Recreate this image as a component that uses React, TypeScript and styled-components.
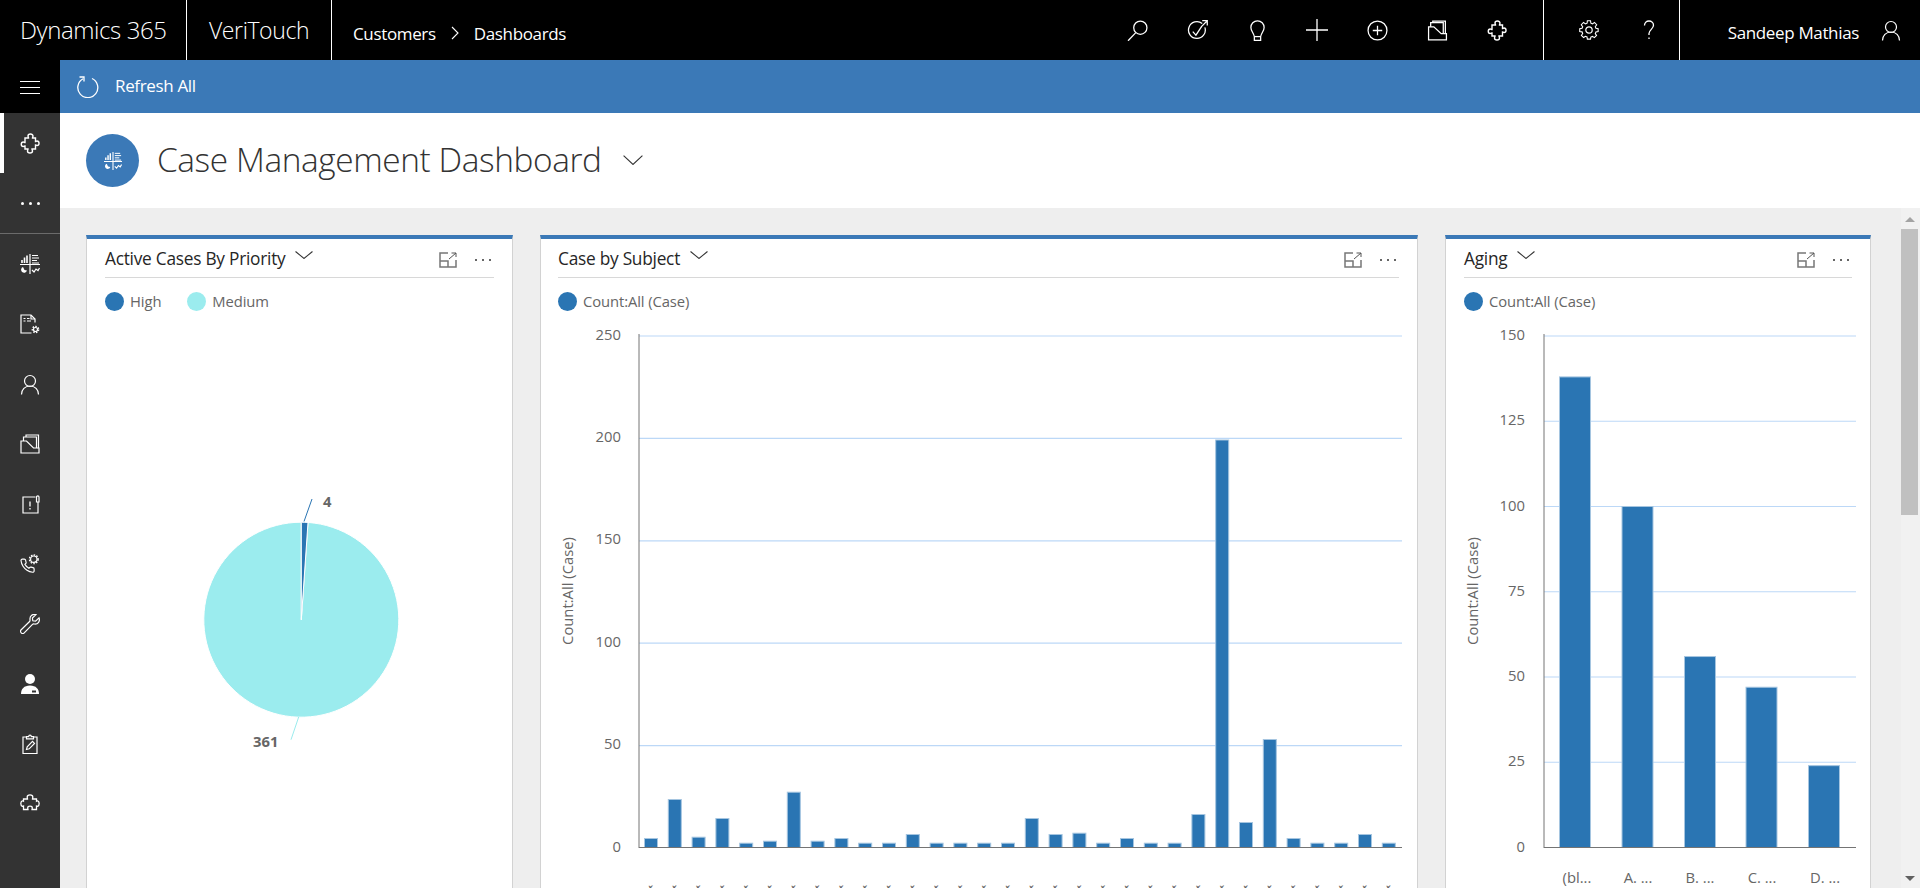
import React from "react";
import styled, { createGlobalStyle } from "styled-components";

const Global = createGlobalStyle`
  html, body { margin: 0; padding: 0; height: 100%; overflow: hidden; background: #eee; }
  #root { height: 100%; }
  * { box-sizing: border-box; }
  body { font-family: "Open Sans", "Noto Sans", "Liberation Sans", sans-serif; }
`;

const Page = styled.div`
  height: 888px;
  display: flex;
  flex-direction: column;
  overflow: hidden;
`;
const TopBar = styled.header`
  height: 60px;
  flex: none;
  background: #000;
  color: #fff;
  display: flex;
  align-items: stretch;
`;
const BrandCell = styled.div<{ $w: number; $pad: number; $size: number }>`
  width: ${(p) => p.$w}px;
  padding-left: ${(p) => p.$pad}px;
  font-size: ${(p) => p.$size}px;
  font-weight: 300;
  letter-spacing: -0.4px;
  border-right: 1px solid #fff;
  display: flex;
  align-items: center;
  padding-bottom: 1px;
  white-space: nowrap;
`;
const Crumbs = styled.nav`
  padding: 6px 0 0 21px;
  display: flex;
  align-items: center;
  gap: 15px;
  font-size: 17px;
  letter-spacing: -0.35px;
`;
const IconGroup = styled.div`
  margin-left: auto;
  display: flex;
  margin-right: 16px;
`;
const SettingsGroup = styled.div`
  border-left: 1px solid #fff;
  border-right: 1px solid #fff;
  padding-left: 15px;
  display: flex;
`;
const TopIcon = styled.button`
  width: 60px;
  height: 60px;
  padding: 0;
  border: 0;
  background: none;
  color: #fff;
  display: flex;
  align-items: center;
  justify-content: center;
`;
const UserCell = styled.div`
  width: 240px;
  display: flex;
  align-items: center;
  justify-content: flex-end;
  gap: 22px;
  padding-right: 19px;
  font-size: 17px;
  letter-spacing: -0.35px;
  span { padding-top: 4px; }
`;
const Body = styled.div`
  flex: 1;
  min-height: 0;
  display: flex;
`;
const Sidebar = styled.aside`
  width: 60px;
  flex: none;
  background: #333;
  color: #fff;
  display: flex;
  flex-direction: column;
`;
const Hamburger = styled.div`
  height: 53px;
  background: #000;
  padding-top: 2px;
  display: flex;
  flex-direction: column;
  align-items: center;
  justify-content: center;
  gap: 5px;
  i { display: block; width: 20px; height: 1px; background: #fff; }
`;
const NavItem = styled.div<{ $active?: boolean }>`
  height: 60px;
  flex: none;
  position: relative;
  display: flex;
  align-items: center;
  justify-content: center;
  &::before {
    content: "";
    display: ${(p) => (p.$active ? "block" : "none")};
    position: absolute;
    left: 0;
    top: 0;
    bottom: 0;
    width: 4px;
    background: #fff;
  }
`;
const NavRule = styled.div`
  height: 1px;
  flex: none;
  background: #6b6b6b;
`;
const Dots = styled.div<{ $color?: string; $size: number; $gap: number }>`
  display: flex;
  gap: ${(p) => p.$gap}px;
  i {
    width: ${(p) => p.$size}px;
    height: ${(p) => p.$size}px;
    border-radius: 50%;
    background: ${(p) => p.$color || "#fff"};
    display: block;
  }
`;
const Main = styled.main`
  flex: 1;
  min-width: 0;
  display: flex;
  flex-direction: column;
`;
const CommandBar = styled.div`
  height: 53px;
  flex: none;
  background: #3b79b7;
  color: #fff;
  display: flex;
  align-items: center;
  padding: 0 0 2px 17px;
  gap: 16px;
  font-size: 17px;
  letter-spacing: -0.35px;
`;
const PageHeader = styled.div`
  height: 95px;
  flex: none;
  background: #fff;
  display: flex;
  align-items: center;
  padding-left: 26px;
`;
const Badge = styled.div`
  width: 53px;
  height: 53px;
  border-radius: 50%;
  background: #3b79b7;
  color: #fff;
  display: flex;
  align-items: center;
  justify-content: center;
  margin-right: 18px;
`;
const PageTitle = styled.h1`
  margin: 0 21px 4px 0;
  font-size: 33.4px;
  font-weight: 300;
  color: #333;
  letter-spacing: -0.4px;
  white-space: nowrap;
`;
const PageCaret = styled.span`
  display: flex;
  margin-bottom: 2px;
`;
const Workspace = styled.div`
  flex: 1;
  min-height: 0;
  display: flex;
`;
const Cards = styled.div`
  flex: 1;
  min-width: 0;
  display: grid;
  grid-template-columns: 427px 878px 426px;
  column-gap: 27px;
  padding: 27px 0 0 26px;
  overflow: hidden;
`;
const Card = styled.section`
  height: 720px;
  background: #fff;
  border: 1px solid #d2d2d2;
  border-top: 4px solid #3b79b7;
  overflow: hidden;
`;
const CardHead = styled.div<{ $inset?: number }>`
  height: 39px;
  margin: 0 18px 0 ${(p) => p.$inset ?? 18}px;
  border-bottom: 1px solid #d8d8d8;
  display: flex;
  align-items: center;
  color: #333;
`;
const CardTitle = styled.h2`
  margin: 0 10px 0 0;
  font-size: 17.3px;
  font-weight: 400;
  color: #262626;
  letter-spacing: -0.25px;
  white-space: nowrap;
`;
const TitleCaret = styled.span`
  display: flex;
  margin-bottom: 7px;
`;
const CardTools = styled.div`
  margin-left: auto;
  display: flex;
  align-items: center;
  gap: 18px;
  padding-right: 3px;
  padding-top: 3px;
`;
const Legend = styled.div<{ $inset?: number }>`
  height: 46px;
  margin: 0 18px 0 ${(p) => p.$inset ?? 18}px;
  display: flex;
  align-items: center;
  gap: 26px;
`;
const LegendItem = styled.div<{ $color: string }>`
  display: flex;
  align-items: center;
  gap: 6px;
  font-size: 14.8px;
  color: #666;
  letter-spacing: -0.1px;
  &::before {
    content: "";
    width: 19px;
    height: 19px;
    border-radius: 50%;
    background: ${(p) => p.$color};
  }
`;
const Chart = styled.svg`
  display: block;
  text {
    font-family: "Open Sans", "Noto Sans", sans-serif;
    font-size: 14.8px;
    fill: #666;
  }
  text.value { font-weight: 700; }
`;
const Scrollbar = styled.div`
  width: 19px;
  flex: none;
  background: #f1f1f1;
  display: flex;
  flex-direction: column;
  align-items: center;
  padding-right: 2px;
`;
const Arrow = styled.div<{ $down?: boolean }>`
  width: 0;
  height: 0;
  border-left: 5px solid transparent;
  border-right: 5px solid transparent;
  ${(p) => (p.$down ? "border-top: 5px solid #606060;" : "border-bottom: 5px solid #a3a3a3;")}
  margin: ${(p) => (p.$down ? "auto 0 7px" : "9px 0 7px")};
`;
const Thumb = styled.div`
  width: 17px;
  height: 286px;
  background: #c0c0c0;
`;

const Ic = ({ w = 20, h = 20, sw = 1.2, children }: { w?: number; h?: number; sw?: number; children: React.ReactNode }) => (
  <svg width={w} height={h} viewBox="0 0 20 20" fill="none" stroke="currentColor" strokeWidth={sw}>
    {children}
  </svg>
);

const GearMark = ({ x, y, r }: { x: number; y: number; r: number }) => (
  <g>
    <circle cx={x} cy={y} r={r} />
    <circle cx={x} cy={y} r={r + 1.1} strokeWidth={1.5} strokeDasharray="1.5 1.3" />
  </g>
);

const SearchIcon = () => (
  <Ic w={21} h={21}>
    <circle cx="12.7" cy="7.3" r="6.3" />
    <path d="M8.4 12 1 19.8" />
  </Ic>
);
const TaskIcon = () => (
  <Ic w={21} h={21}>
    <path d="M14.5 3.4A8 8 0 1 0 17 7" />
    <path d="M5.5 11l3 3.4 5.5-8.4" />
    <path d="M13.5 6.5 19.3.7M14.5.7h4.8v4.6" />
  </Ic>
);
const BulbIcon = () => (
  <Ic w={21} h={21}>
    <path d="M10 .8a6.3 6.3 0 0 0-6.3 6.4c0 3.2 2.5 5 3.3 8.6v3.6h6v-3.6c.8-3.6 3.3-5.4 3.3-8.6A6.3 6.3 0 0 0 10 .8Z" />
    <path d="M7 15.8h6" />
  </Ic>
);
const PlusIcon = () => (
  <Ic w={22} h={22}>
    <path d="M10 0v20M0 10h20" />
  </Ic>
);
const CirclePlusIcon = () => (
  <Ic w={21} h={21}>
    <circle cx="10" cy="10" r="9" />
    <path d="M10 5.5v9M5.5 10h9" />
  </Ic>
);
const CasesIcon = () => (
  <Ic w={21} h={21}>
    <path d="M1.5 6.5h5l7 6.5h5v6h-17Z" />
    <path d="M3.5 6.5V2.5h12v10" />
    <path d="M5.5 2.5V1h12v12" />
  </Ic>
);
const PuzzleIcon = () => (
  <Ic w={20} h={21} sw={1.4}>
    <path d="M5 4.5H8.5C8.5 3.5 8 3 8 2.5A2.5 2 0 0 1 13 2.5C13 3 12.5 3.5 12.5 4.5H15.5V8C16 8 16.3 7.5 17 7.5A2 2.2 0 0 1 17 12C16.3 12 16 11.5 15.5 11.5V15.5H12C12 16.5 12.5 17 12.5 17.5A2.5 2 0 0 1 7.5 17.5C7.5 17 8 16.5 8 15.5H5V12.5C4.5 12.5 4 13 3.3 13A2 2.2 0 0 1 3.3 8.5C4 8.5 4.5 9 5 9Z" />
  </Ic>
);
const GearIcon = () => (
  <Ic w={20} h={20}>
    <path d="M8.3 1h3.4l.4 2.6 1.7.8 2.2-1.5 2.4 2.4-1.5 2.2.7 1.7 2.4.4v3.2l-2.4.5-.7 1.7 1.4 2-2.4 2.4-2.1-1.4-1.7.7-.4 2.3H8.3l-.4-2.4-1.7-.7-2 1.4-2.4-2.4 1.4-2.1-.7-1.7L0 12.8V9.6l2.5-.4.7-1.7-1.5-2.2 2.4-2.4 2.2 1.5 1.7-.8Z" transform="scale(.92) translate(.8 -.2)" />
    <circle cx="10" cy="10" r="3.2" />
  </Ic>
);
const HelpIcon = () => (
  <Ic w={20} h={24} sw={1.3}>
    <path d="M5.5 5.5C5.5 2.5 7.5 1 10 1s4.5 1.8 4.5 4.3c0 3.6-4.500 4.5-4.500 8.200v1.500" />
    <path d="M10 17.500v1.500" />
  </Ic>
);
const UserIcon = () => (
  <Ic w={20} h={21}>
    <circle cx="10" cy="6.5" r="5.5" />
    <path d="M1.5 20c0-5 3.5-8.5 8.5-8.5s8.5 3.5 8.5 8.5" />
  </Ic>
);
const RefreshIcon = () => (
  <svg width="22" height="24" viewBox="0 0 22 24" fill="none" stroke="currentColor" strokeWidth="1.3">
    <path d="M6 4.8A10 10 0 1 0 15 4.5" />
    <path d="M2.5 3h4.5v4.5" />
  </svg>
);
const DashIcon = ({ size = 20 }: { size?: number }) => (
  <svg width={size} height={size} viewBox="0 0 20 20" fill="none" stroke="currentColor" strokeWidth="1">
    <path d="M10 0v20M0 10.5h20" strokeWidth="1.2" />
    <path d="M2 9V6M4.5 9V3.5M7 9V1.5" strokeWidth="1.6" />
    <path d="M12 1.5h6M12 4h7M12 6.5h5M12 9h7" strokeWidth="1.1" />
    <path d="M3 13a3 3 0 1 0 4 3.600L4.500 16Z" fill="currentColor" stroke="none" />
    <path d="M12 16l2 2 2-3 2 1.500 1.500-2.500" strokeWidth="1.2" />
  </svg>
);
const DocGearIcon = () => (
  <Ic w={20} h={20}>
    <path d="M15 8.5V5L11 1H1v18h10.5" />
    <path d="M11 1v4h4" />
    <path d="M3.5 4.5h2M7 4.5h2.5M3.5 7h2M7 7h4" />
    <GearMark x={15.5} y={15.5} r={2} />
  </Ic>
);
const FolderIcon = () => (
  <Ic w={20} h={20}>
    <path d="M1 7h5.5l7 7H19v5H1Z" />
    <path d="M3.5 7V3h13v11" />
    <path d="M6 3V1h12.5v13" />
  </Ic>
);
const AlertBookIcon = () => (
  <Ic w={20} h={20}>
    <path d="M15.5 3H3v16h15V8" />
    <path d="M16.5 3c0-1.5 2.500-1.500 2.500 0v5h-2.500Z" />
    <path d="M10 7.5v5M10 14v1.5" strokeWidth="1.3" />
  </Ic>
);
const PhoneGearIcon = () => (
  <Ic w={20} h={20}>
    <path
      transform="translate(-.4 3.8) scale(.66)"
      strokeWidth="1.8"
      d="M22 16.92v3a2 2 0 0 1-2.18 2 19.79 19.79 0 0 1-8.63-3.07 19.5 19.5 0 0 1-6-6 19.79 19.79 0 0 1-3.07-8.67A2 2 0 0 1 4.11 2h3a2 2 0 0 1 2 1.72 12.84 12.84 0 0 0 .7 2.81 2 2 0 0 1-.45 2.11L8.09 9.91a16 16 0 0 0 6 6l1.27-1.27a2 2 0 0 1 2.11-.45 12.84 12.84 0 0 0 2.81.7A2 2 0 0 1 22 16.92z"
    />
    <GearMark x={13.8} y={5.2} r={3.2} />
  </Ic>
);
const WrenchIcon = () => (
  <Ic w={20} h={20}>
    <path d="M19 3.8 15.6 7.2l-2.8-.4-.4-2.800L16 .6c-3-1-6.500 1.200-6 5.100.1.800.1 1.300-.4 1.800L1.200 15.800c-1 1-1 2 0 3s2 1 3 0l8.300-8.400c.5-.5 1-.5 1.800-.4 3.900.5 6-3 4.700-6.200Z" />
  </Ic>
);
const BadgeUserIcon = () => (
  <svg width="20" height="20" viewBox="0 0 20 20" fill="currentColor">
    <circle cx="10" cy="5" r="5" />
    <path fillRule="evenodd" d="M1 20c0-5 3-8.5 9-8.5s9 3.5 9 8.5ZM12 16.5v2h4v-2Z" />
  </svg>
);
const ClipboardIcon = () => (
  <Ic w={20} h={20}>
    <path d="M6.5 3H3v16.500h14V3h-3.500" />
    <path d="M6.5 4.8V2.600h2.200c0-2 2.600-2 2.600 0h2.200v2.200Z" />
    <path d="M6.5 15.500l.7-2.700 5.300-5.400 2 2-5.300 5.400Z" />
  </Ic>
);
const PuzzleWideIcon = () => (
  <Ic w={22} h={20} sw={1.3}>
    <path d="M3.5 5H7.5C7.5 4.2 7.200 3.800 7.200 3.100A2.800 2.200 0 0 1 12.800 3.100C12.800 3.800 12.500 4.200 12.500 5H16.500V7.200C17 7 17.200 6.800 17.700 6.800A2 2.900 0 0 1 17.700 12.400C17.200 12.400 17 12.200 16.500 12V15.500H12C12 14.800 12.300 14.500 12.300 14A2.300 1.800 0 0 0 7.700 14C7.700 14.500 8 14.800 8 15.500H3.500V12C3 12.200 2.800 12.400 2.300 12.400A2 2.900 0 0 1 2.300 6.800C2.800 6.800 3 7 3.500 7.200Z" />
  </Ic>
);
const ChevronDown = ({ w = 18, h = 8, color = "#333" }: { w?: number; h?: number; color?: string }) => (
  <svg width={w} height={h} viewBox="0 0 17 8" fill="none" stroke={color} strokeWidth="1" preserveAspectRatio="none">
    <path d="M.5.5 8.500 7.500 16.500.5" />
  </svg>
);
const CrumbChevron = () => (
  <svg width="8" height="14" viewBox="0 0 8 14" fill="none" stroke="#fff" strokeWidth="1.1">
    <path d="M1 1l6 6-6 6" />
  </svg>
);
const ExpandIcon = () => (
  <svg width="18" height="16" viewBox="0 0 18 16" fill="none" stroke="#777" strokeWidth="1.5">
    <path d="M9 1H1v14h16V8M1 9h8v6" />
    <path d="M10 7l7-6M12.500 1H17v4" stroke="#555" strokeWidth="1" />
  </svg>
);
const CardToolbar = () => (
  <CardTools>
    <ExpandIcon />
    <Dots $color="#333" $size={2} $gap={5}><i /><i /><i /></Dots>
  </CardTools>
);

const Y0 = 848;
const AXIS = "#747474";
const GRID = "#bcd8f7";
const BAR = "#2a75b3";
const BAR_EDGE = "#a5c5e0";
const PIE = "#9becee";

const subjectHeights = [9, 48, 10.3, 29, 4.3, 6.3, 55.3, 6.3, 9, 4.3, 4.3, 13, 4.3, 4.3, 4.3, 4.3, 29, 13, 14.3, 4.3, 9, 4.3, 4.3, 33, 407.5, 25, 108, 9, 4.3, 4.3, 13, 4.3];

const SubjectChart = () => (
  <Chart width={876} height={600} viewBox="541 325 876 600">
    {[0, 50, 100, 150, 200, 250].map((v) => {
      const y = Y0 - v * 2.048;
      return (
        <g key={v}>
          {v > 0 && <line x1={639} x2={1402} y1={y + 1} y2={y + 1} stroke={GRID} strokeWidth={1.2} />}
          <text x={621} y={y + 4.5} textAnchor="end">{v}</text>
        </g>
      );
    })}
    {subjectHeights.map((h, i) => {
      const x = 644 + i * 23.8;
      return (
        <g key={i}>
          <rect x={x + 0.5} y={Y0 - h + 0.5} width={13} height={h} fill={BAR} stroke={BAR_EDGE} />
          <text x={x + 14} y={891.5} textAnchor="end" transform={`rotate(-45 ${x + 14} 891.5)`}>
            Subject
          </text>
        </g>
      );
    })}
    <line x1={639} x2={639} y1={335} y2={Y0} stroke={AXIS} />
    <line x1={638.5} x2={1402} y1={Y0 + 0.5} y2={Y0 + 0.5} stroke={AXIS} />
    <text x={573} y={592} textAnchor="middle" transform="rotate(-90 573 592)">Count:All (Case)</text>
  </Chart>
);

const agingBars = [
  { x: 1559.5, v: 138, label: "(bl...", cx: 1577 },
  { x: 1622, v: 100, label: "A. ...", cx: 1638 },
  { x: 1684.5, v: 56, label: "B. ...", cx: 1700 },
  { x: 1746, v: 47, label: "C. ...", cx: 1762 },
  { x: 1808.5, v: 24, label: "D. ...", cx: 1825 },
];

const AgingChart = () => (
  <Chart width={424} height={600} viewBox="1446 325 424 600">
    {[0, 25, 50, 75, 100, 125, 150].map((v) => {
      const y = Y0 - v * 3.41;
      return (
        <g key={v}>
          {v > 0 && <line x1={1544} x2={1856} y1={y + 0.5} y2={y + 0.5} stroke={GRID} strokeWidth={1.2} />}
          <text x={1525} y={y + 4.5} textAnchor="end">{v}</text>
        </g>
      );
    })}
    {agingBars.map((b) => (
      <g key={b.label}>
        <rect x={b.x} y={Y0 - b.v * 3.41 + 0.5} width={31} height={b.v * 3.41} fill={BAR} stroke={BAR_EDGE} />
        <text x={b.cx} y={884} textAnchor="middle">{b.label}</text>
      </g>
    ))}
    <line x1={1544} x2={1544} y1={335} y2={Y0} stroke={AXIS} />
    <line x1={1543.5} x2={1856} y1={Y0 + 0.5} y2={Y0 + 0.5} stroke={AXIS} />
    <text x={1478} y={592} textAnchor="middle" transform="rotate(-90 1478 592)">Count:All (Case)</text>
  </Chart>
);

const polar = (cx: number, cy: number, r: number, deg: number) => {
  const a = ((deg - 90) * Math.PI) / 180;
  return [cx + r * Math.cos(a), cy + r * Math.sin(a)];
};
const PieChart = () => {
  const cx = 301.3;
  const cy = 620.7;
  const r = 97.5;
  const sweep = (4 / 365) * 360;
  const [ex, ey] = polar(cx, cy, r, sweep);
  const [sx, sy] = [cx, cy - r];
  return (
    <Chart width={425} height={600} viewBox="87 325 425 600">
      <path d={`M${cx} ${cy}L${ex} ${ey}A${r} ${r} 0 1 1 ${sx} ${sy}Z`} fill={PIE} stroke="#fff" strokeWidth={1} />
      <path d={`M${cx} ${cy}L${sx} ${sy}A${r} ${r} 0 0 1 ${ex} ${ey}Z`} fill={BAR} stroke="#fff" strokeWidth={1} />
      <line x1={304} y1={522.5} x2={312} y2={500} stroke={BAR} />
      <line x1={298.7} y1={718} x2={291} y2={740.7} stroke={PIE} />
      <text className="value" x={323} y={508}>4</text>
      <text className="value" x={253} y={748}>361</text>
    </Chart>
  );
};

export default function App() {
  return (
    <Page>
      <Global />
      <TopBar>
        <BrandCell $w={187} $pad={20} $size={24}>Dynamics 365</BrandCell>
        <BrandCell $w={145} $pad={22} $size={23}>VeriTouch</BrandCell>
        <Crumbs>
          <span>Customers</span>
          <CrumbChevron />
          <span>Dashboards</span>
        </Crumbs>
        <IconGroup>
          <TopIcon><SearchIcon /></TopIcon>
          <TopIcon><TaskIcon /></TopIcon>
          <TopIcon><BulbIcon /></TopIcon>
          <TopIcon><PlusIcon /></TopIcon>
          <TopIcon><CirclePlusIcon /></TopIcon>
          <TopIcon><CasesIcon /></TopIcon>
          <TopIcon><PuzzleIcon /></TopIcon>
        </IconGroup>
        <SettingsGroup>
          <TopIcon><GearIcon /></TopIcon>
          <TopIcon><HelpIcon /></TopIcon>
        </SettingsGroup>
        <UserCell>
          <span>Sandeep Mathias</span>
          <UserIcon />
        </UserCell>
      </TopBar>
      <Body>
        <Sidebar>
          <Hamburger><i /><i /><i /></Hamburger>
          <NavItem $active><PuzzleIcon /></NavItem>
          <NavItem><Dots $size={3} $gap={5}><i /><i /><i /></Dots></NavItem>
          <NavRule />
          <NavItem><DashIcon /></NavItem>
          <NavItem><DocGearIcon /></NavItem>
          <NavItem><UserIcon /></NavItem>
          <NavItem><FolderIcon /></NavItem>
          <NavItem><AlertBookIcon /></NavItem>
          <NavItem><PhoneGearIcon /></NavItem>
          <NavItem><WrenchIcon /></NavItem>
          <NavItem><BadgeUserIcon /></NavItem>
          <NavItem><ClipboardIcon /></NavItem>
          <NavItem><PuzzleWideIcon /></NavItem>
        </Sidebar>
        <Main>
          <CommandBar>
            <RefreshIcon />
            <span>Refresh All</span>
          </CommandBar>
          <PageHeader>
            <Badge><DashIcon size={18} /></Badge>
            <PageTitle>Case Management Dashboard</PageTitle>
            <PageCaret><ChevronDown w={20} h={10} /></PageCaret>
          </PageHeader>
          <Workspace>
            <Cards>
              <Card>
                <CardHead>
                  <CardTitle>Active Cases By Priority</CardTitle>
                  <TitleCaret><ChevronDown /></TitleCaret>
                  <CardToolbar />
                </CardHead>
                <Legend>
                  <LegendItem $color={BAR}>High</LegendItem>
                  <LegendItem $color={PIE}>Medium</LegendItem>
                </Legend>
                <PieChart />
              </Card>
              <Card>
                <CardHead $inset={17}>
                  <CardTitle>Case by Subject</CardTitle>
                  <TitleCaret><ChevronDown /></TitleCaret>
                  <CardToolbar />
                </CardHead>
                <Legend $inset={17}>
                  <LegendItem $color={BAR}>Count:All (Case)</LegendItem>
                </Legend>
                <SubjectChart />
              </Card>
              <Card>
                <CardHead>
                  <CardTitle>Aging</CardTitle>
                  <TitleCaret><ChevronDown /></TitleCaret>
                  <CardToolbar />
                </CardHead>
                <Legend>
                  <LegendItem $color={BAR}>Count:All (Case)</LegendItem>
                </Legend>
                <AgingChart />
              </Card>
            </Cards>
            <Scrollbar>
              <Arrow />
              <Thumb />
              <Arrow $down />
            </Scrollbar>
          </Workspace>
        </Main>
      </Body>
    </Page>
  );
}
